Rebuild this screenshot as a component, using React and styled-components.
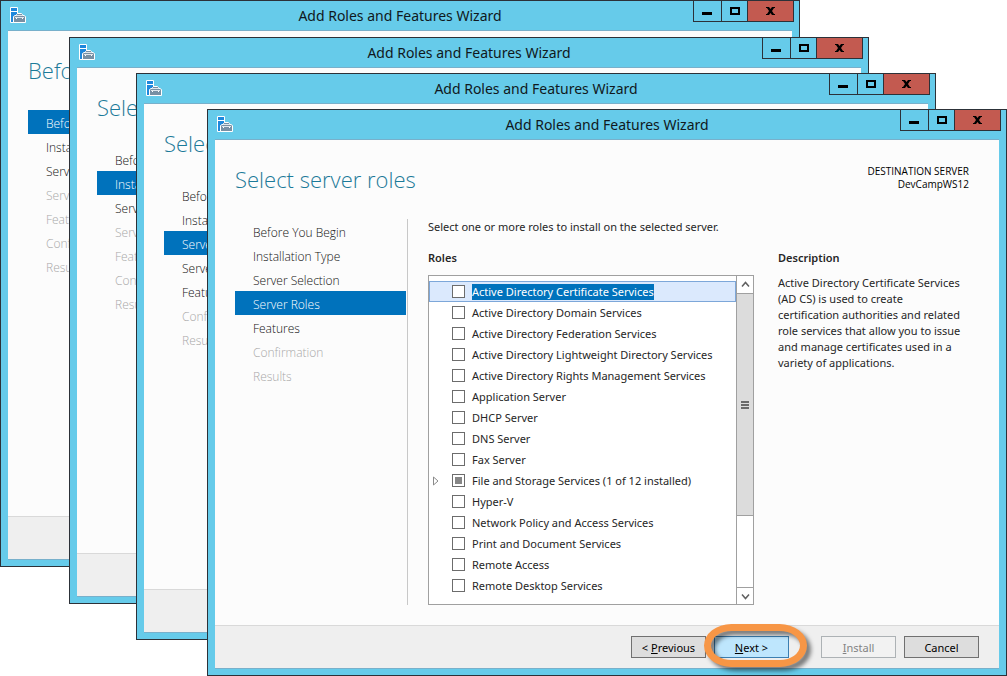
import React, { useEffect, useRef } from "react";
import styled, { createGlobalStyle, css } from "styled-components";

const GlobalStyle = createGlobalStyle`
  *, *::before, *::after { box-sizing: border-box; }
  body {
    margin: 0;
    background: #fff;
    color: #262626;
    font-family: "Noto Sans", "Open Sans", sans-serif;
    font-size: 11px;
    line-height: 16px;
  }
  h1, h2, p, ul, ol { margin: 0; padding: 0; }
  ul, ol { list-style: none; }
  button { font: inherit; color: inherit; margin: 0; padding: 0; }
`;

const Desktop = styled.main`
  position: relative;
  min-height: 100vh;
  overflow: hidden;
`;

const Window = styled.section`
  position: absolute;
  left: ${(p) => p.$x}px;
  top: ${(p) => p.$y}px;
  width: calc(100% - 207px);
  height: calc(100vh - 109px);
  display: flex;
  flex-direction: column;
  padding-bottom: 6px;
  border: 1px solid #2c3138;
  background: #66cbea;
`;

const TitleBar = styled.header`
  display: grid;
  grid-template-columns: 1fr auto 1fr;
  height: 29px;
  padding: 0 5px;
`;

const AppIcon = styled.svg`
  margin: 6px 0 0 4px;
`;

const WindowTitle = styled.h1`
  align-self: center;
  color: #101820;
  font-size: 14px;
  font-weight: 400;
  line-height: 20px;
`;

const Controls = styled.div`
  display: flex;
  justify-self: end;
  height: 21px;
`;

const ControlButton = styled.button`
  display: flex;
  align-items: center;
  justify-content: center;
  width: ${(p) => p.$width}px;
  border: solid #2c3138;
  border-width: ${(p) => (p.$close ? "0 1px 1px 1px" : "0 0 1px 1px")};
  background: ${(p) => (p.$close ? "#c35a50" : "transparent")};
`;

const Client = styled.div`
  flex: 1;
  display: flex;
  flex-direction: column;
  min-height: 0;
  margin: 0 7px;
  border: solid #78b0cb;
  border-width: 1px 0;
  background: #fcfcfc;
`;

const PageHeader = styled.div`
  display: flex;
  justify-content: space-between;
  height: 79px;
  padding: 24px 30px 0 20px;
  font-family: "Open Sans", "Noto Sans", sans-serif;
`;

const PageTitle = styled.h2`
  color: #1c7a99;
  font-size: 22px;
  font-weight: 300;
  line-height: 30px;
`;

const Destination = styled.p`
  padding-top: 1px;
  font-size: 10px;
  line-height: 13px;
  text-align: right;
  color: #000;
`;

const Body = styled.div`
  flex: 1;
  display: flex;
  min-height: 0;
  padding: 0 29px 20px 20px;
`;

const Steps = styled.nav`
  flex: none;
  width: 173px;
  padding-right: 1px;
  border-right: ${(p) => (p.$divided ? "1px solid #c8c8c8" : "0")};
  font-family: "Open Sans", "Noto Sans", sans-serif;
`;

const StepButton = styled.button`
  display: block;
  width: 100%;
  height: 24px;
  padding: 3px 0 0 18px;
  border: 0;
  background: transparent;
  color: #111;
  font-size: 12px;
  font-weight: 300;
  line-height: 21px;
  text-align: left;
  &:disabled { color: #a8a8a8; }
  ${(p) => p.$current && css`
    background: #0072bc;
    color: #fff;
  `}
`;

const Content = styled.div`
  flex: 1;
  display: flex;
  flex-direction: column;
  gap: 15px;
  min-width: 0;
  padding-left: 20px;
`;

const Columns = styled.div`
  flex: 1;
  display: grid;
  grid-template-columns: minmax(0, 1fr) 192px;
  gap: 24px;
  min-height: 0;
`;

const Column = styled.section`
  display: flex;
  flex-direction: column;
  gap: 9px;
  min-height: 0;
`;

const ColumnTitle = styled.h2`
  font-size: 11px;
  font-weight: 600;
  line-height: 16px;
`;

const ListBox = styled.div`
  flex: 1;
  display: flex;
  min-height: 0;
  border: 1px solid #a0a0a0;
  background: #fff;
`;

const RoleList = styled.ul`
  flex: 1;
  min-width: 0;
  padding-top: 5px;
  overflow: hidden;
`;

const RoleRow = styled.li`
  display: flex;
  align-items: center;
  height: 21px;
  padding-left: 3px;
  border: 1px solid ${(p) => (p.$selected ? "#7da7d9" : "transparent")};
  background: ${(p) => (p.$selected ? "#dbe9fd" : "transparent")};
`;

const Expander = styled.button`
  display: flex;
  flex: none;
  width: 19px;
  border: 0;
  background: none;
`;

const ExpanderSpace = styled.span`
  flex: none;
  width: 19px;
`;

const RoleLabel = styled.label`
  display: flex;
  align-items: center;
  gap: 7px;
  white-space: nowrap;
`;

const CheckBox = styled.input`
  appearance: none;
  width: 13px;
  height: 13px;
  margin: 0;
  border: 1px solid #6c6c6c;
  background: #fff;
  &:indeterminate {
    border-color: #6c6c6c;
    background: #868686;
    box-shadow: inset 0 0 0 2px #fff;
  }
`;

const RoleName = styled.span`
  color: ${(p) => (p.$selected ? "#fff" : "inherit")};
  background: ${(p) => (p.$selected ? "#0072bc" : "transparent")};
`;

const ScrollBar = styled.div`
  display: flex;
  flex-direction: column;
  width: 17px;
  border-left: 1px solid #a0a0a0;
`;

const ScrollButton = styled.button`
  display: flex;
  align-items: center;
  justify-content: center;
  height: 17px;
  border: 0;
  border-top: ${(p) => (p.$down ? "1px solid #a0a0a0" : "0")};
  background: #fff;
`;

const ScrollTrack = styled.div`
  flex: 1;
`;

const ScrollThumb = styled.div`
  display: flex;
  align-items: center;
  justify-content: center;
  height: 76%;
  border: solid #a0a0a0;
  border-width: 1px 0;
  background: #dcdcdc;
`;

const Description = styled.p`
  padding-right: 6px;
`;

const Footer = styled.footer`
  display: flex;
  justify-content: flex-end;
  gap: 8px;
  height: 43px;
  padding: 10px 20px;
  border-top: 1px solid #d9d9d9;
  background: #efefef;
`;

const PushButton = styled.button`
  position: relative;
  width: 75px;
  height: 22px;
  padding-top: 1px;
  border: 1px solid #707070;
  background: #ddd;
  color: #000;
  line-height: 19px;
  &:disabled {
    margin-left: 24px;
    border-color: #adb2b5;
    background: #f2f2f2;
    color: #838383;
  }
  ${(p) => p.$primary && css`
    border-color: #3c7fb1;
    background: #bee6fd;
  `}
`;

const Highlight = styled.span`
  position: absolute;
  inset: -13px -19px -10px -11px;
  border: 7px solid #f79646;
  border-radius: 28px / 22px;
  filter: drop-shadow(4px 4px 2px rgba(0, 0, 0, 0.5));
  pointer-events: none;
`;

const STEPS = [
  "Before You Begin",
  "Installation Type",
  "Server Selection",
  "Server Roles",
  "Features",
  "Confirmation",
  "Results",
];

const ROLES = [
  "Active Directory Certificate Services",
  "Active Directory Domain Services",
  "Active Directory Federation Services",
  "Active Directory Lightweight Directory Services",
  "Active Directory Rights Management Services",
  "Application Server",
  "DHCP Server",
  "DNS Server",
  "Fax Server",
  "File and Storage Services (1 of 12 installed)",
  "Hyper-V",
  "Network Policy and Access Services",
  "Print and Document Services",
  "Remote Access",
  "Remote Desktop Services",
];

function ServerToolboxIcon() {
  return (
    <AppIcon width="16" height="16" viewBox="0 0 16 16" aria-hidden="true">
      <path d="M0.5 0.5h7v15h-7z" fill="#1e88dc" stroke="#fff" />
      <path d="M1 4.5h6" stroke="#fff" />
      <path
        d="M3.5 15.5V9.500L5 8.500h1.500V7.500l1-1h4l1 1v1H14l1.500 1v6z"
        fill="#7890a4"
        stroke="#fff"
      />
      <path d="M7 8.500h5" stroke="#dfe6ec" />
      <path d="M5 10.500h9" stroke="#dfe6ec" />
      <path d="M6 11h1v1H6zM12 11h1v1h-1z" fill="#fff" />
    </AppIcon>
  );
}

function WizardWindow({ x, y, title, current, enabled, front, children }) {
  return (
    <Window $x={x} $y={y} aria-label={title}>
      <TitleBar>
        <ServerToolboxIcon />
        <WindowTitle>Add Roles and Features Wizard</WindowTitle>
        <Controls>
          <ControlButton $width={28} aria-label="Minimize">
            <svg width="11" height="10" viewBox="0 0 11 10">
              <path d="M0 6h10v3H0z" />
            </svg>
          </ControlButton>
          <ControlButton $width={26} aria-label="Maximize">
            <svg width="10" height="8" viewBox="0 0 10 8">
              <path d="M1 1h8v6H1z" fill="none" stroke="#000" strokeWidth="2" />
            </svg>
          </ControlButton>
          <ControlButton $width={47} $close aria-label="Close">
            <svg width="9" height="8" viewBox="0 0 9 8">
              <path d="M0 0h3l1.500 2L6 0h3v1H8L6 4l2 3h1v1H6L4.500 6 3 8H0V7h1l2-3L1 1H0z" />
            </svg>
          </ControlButton>
        </Controls>
      </TitleBar>
      <Client>
        <PageHeader>
          <PageTitle>{title}</PageTitle>
          {front && (
            <Destination>
              DESTINATION SERVER
              <br />
              DevCampWS12
            </Destination>
          )}
        </PageHeader>
        <Body>
          <Steps $divided={front} aria-label="Wizard steps">
            <ol>
              {STEPS.map((step, i) => (
                <li key={step}>
                  <StepButton $current={i === current} disabled={i >= enabled}>
                    {step}
                  </StepButton>
                </li>
              ))}
            </ol>
          </Steps>
          {children}
        </Body>
        <Footer>
          {front && (
            <>
              <PushButton>
                &lt; <u>P</u>revious
              </PushButton>
              <PushButton $primary>
                <u>N</u>ext &gt;
                <Highlight />
              </PushButton>
              <PushButton disabled>
                <u>I</u>nstall
              </PushButton>
              <PushButton>Cancel</PushButton>
            </>
          )}
        </Footer>
      </Client>
    </Window>
  );
}

function RoleItem({ name, selected, partial }) {
  const box = useRef(null);
  useEffect(() => {
    box.current.indeterminate = Boolean(partial);
  }, [partial]);
  return (
    <RoleRow $selected={selected}>
      {partial ? (
        <Expander aria-label="Expand">
          <svg width="6" height="10" viewBox="0 0 6 10">
            <path d="M0.500 1v8L5 5z" fill="#fff" stroke="#8a8a8a" />
          </svg>
        </Expander>
      ) : (
        <ExpanderSpace />
      )}
      <RoleLabel>
        <CheckBox type="checkbox" ref={box} />
        <RoleName $selected={selected}>{name}</RoleName>
      </RoleLabel>
    </RoleRow>
  );
}

function RolesPage() {
  return (
    <Content>
      <p>Select one or more roles to install on the selected server.</p>
      <Columns>
        <Column>
          <ColumnTitle>Roles</ColumnTitle>
          <ListBox>
            <RoleList>
              {ROLES.map((name, i) => (
                <RoleItem key={name} name={name} selected={i === 0} partial={i === 9} />
              ))}
            </RoleList>
            <ScrollBar>
              <ScrollButton aria-label="Scroll up">
                <svg width="9" height="7" viewBox="0 0 9 7">
                  <path d="M1 5.500 4.500 1.500 8 5.500" fill="none" stroke="#606060" strokeWidth="1.500" />
                </svg>
              </ScrollButton>
              <ScrollTrack>
                <ScrollThumb>
                  <svg width="8" height="8" viewBox="0 0 8 8">
                    <path d="M0 0h8v2H0zM0 3h8v2H0zM0 6h8v2H0z" fill="#6a6a6a" />
                  </svg>
                </ScrollThumb>
              </ScrollTrack>
              <ScrollButton $down aria-label="Scroll down">
                <svg width="9" height="7" viewBox="0 0 9 7">
                  <path d="M1 1.500 4.500 5.500 8 1.500" fill="none" stroke="#606060" strokeWidth="1.500" />
                </svg>
              </ScrollButton>
            </ScrollBar>
          </ListBox>
        </Column>
        <Column>
          <ColumnTitle>Description</ColumnTitle>
          <Description>
            Active Directory Certificate Services (AD CS) is used to create
            certification authorities and related role services that allow you to
            issue and manage certificates used in a variety of applications.
          </Description>
        </Column>
      </Columns>
    </Content>
  );
}

export default function App() {
  return (
    <>
      <GlobalStyle />
      <Desktop>
        <WizardWindow x={0} y={0} title="Before you begin" current={0} enabled={3} />
        <WizardWindow x={69} y={37} title="Select installation type" current={1} enabled={3} />
        <WizardWindow x={136} y={73} title="Select destination server" current={2} enabled={5} />
        <WizardWindow x={207} y={109} title="Select server roles" current={3} enabled={5} front>
          <RolesPage />
        </WizardWindow>
      </Desktop>
    </>
  );
}
